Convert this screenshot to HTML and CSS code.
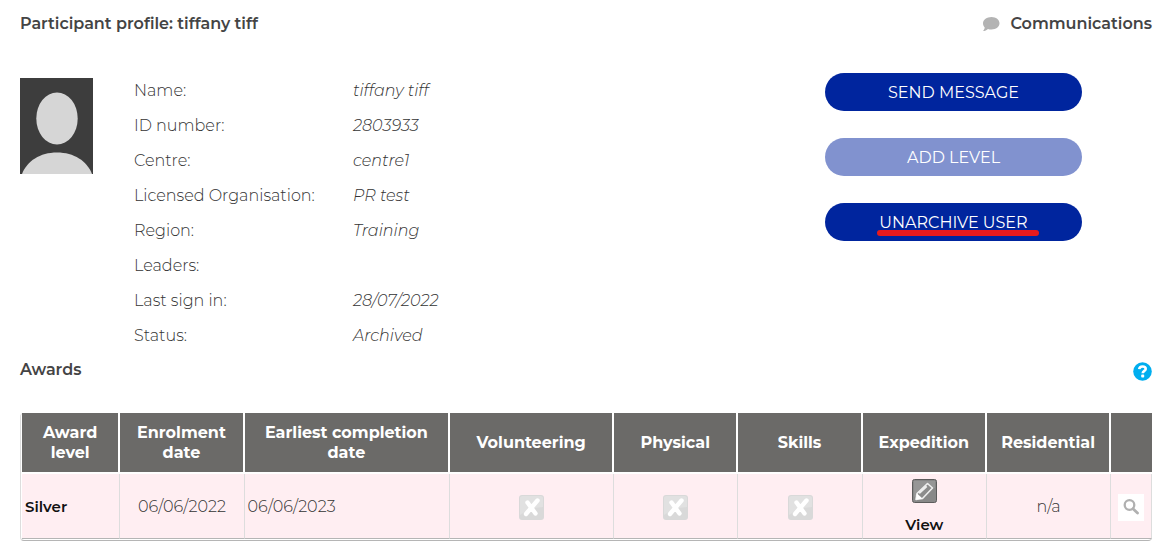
FILE: index.html
```
<!DOCTYPE html>
<html lang="en">
<head>
  <meta charset="UTF-8">
  <meta name="viewport" content="width=device-width, initial-scale=1.0">
  <title>Participant profile</title>
  <link rel="stylesheet" href="styles.css">
</head>
<body>
  <header class="page-header">
    <h1>Participant profile: tiffany tiff</h1>
    <a class="communications" href="#communications">
      <svg width="18" height="16" viewBox="0 0 18 16" aria-hidden="true">
        <path fill="#b3b3b3" d="M9.500 1C14 1 17.500 3.800 17.500 7.300S14 13.500 9.500 13.500C8.200 13.500 7 13.300 6 12.900C4.700 14.200 3 14.900 1 15C2 14 2.600 12.800 2.700 11.500C1.600 10.400 1 9 1 7.300C1 3.800 5 1 9.500 1Z"/>
      </svg>
      Communications
    </a>
  </header>

  <main>
    <section class="profile">
      <svg class="avatar" width="73" height="96" viewBox="0 0 73 96" role="img" aria-label="Profile picture">
        <rect width="73" height="96" fill="#3d3d3d"/>
        <ellipse cx="37" cy="40.500" rx="20.700" ry="26" fill="#d6d6d6"/>
        <path fill="#d6d6d6" d="M2 96C7 83 20 74.500 37 74.500S67 83 72 96Z"/>
      </svg>

      <dl class="details">
        <dt>Name:</dt><dd>tiffany tiff</dd>
        <dt>ID number:</dt><dd>2803933</dd>
        <dt>Centre:</dt><dd>centre1</dd>
        <dt>Licensed Organisation:</dt><dd>PR test</dd>
        <dt>Region:</dt><dd>Training</dd>
        <dt>Leaders:</dt><dd></dd>
        <dt>Last sign in:</dt><dd>28/07/2022</dd>
        <dt>Status:</dt><dd>Archived</dd>
      </dl>

      <div class="actions">
        <button class="btn" type="button">SEND MESSAGE</button>
        <button class="btn" type="button" disabled>ADD LEVEL</button>
        <button class="btn marked" type="button">UNARCHIVE USER</button>
      </div>
    </section>

    <section>
      <div class="awards-header">
        <h2>Awards</h2>
        <a class="help" href="#help" aria-label="Help">
          <svg width="19" height="19" viewBox="0 0 19 19" aria-hidden="true">
            <circle cx="9.500" cy="9.500" r="9.300" fill="#00aeef"/>
            <path d="M6.200 7.200C6.400 5.300 7.700 4.500 9.500 4.500C11.400 4.500 12.700 5.400 12.700 6.900C12.700 8.900 9.700 8.900 9.700 11.300" fill="none" stroke="#fff" stroke-width="2.600"/>
            <rect x="8.200" y="12.600" width="3" height="3" rx="0.800" fill="#fff"/>
          </svg>
        </a>
      </div>

      <!-- Shared award icons -->
      <svg class="icon-defs" width="0" height="0" aria-hidden="true">
        <symbol id="cross" viewBox="0 0 25 25">
          <rect width="25" height="25" rx="3" fill="#d9d9d9"/>
          <path d="M1 3Q1 1 3 1H22Q24 1 24 3V12Q12 12 1 20Z" fill="#e1e1e1"/>
          <path d="M8.500 7.500L16.500 18.500M18.500 5.500L7 19" fill="none" stroke="#fff" stroke-width="4.400" stroke-linecap="round"/>
        </symbol>
      </svg>

      <div class="table-wrap">
        <table class="awards">
          <colgroup>
            <col class="col-level">
            <col class="col-section">
            <col class="col-completion">
            <col class="col-volunteering">
            <col class="col-section">
            <col class="col-section">
            <col class="col-section">
            <col class="col-section">
            <col>
          </colgroup>
          <thead>
            <tr>
              <th>Award level</th>
              <th>Enrolment date</th>
              <th>Earliest completion date</th>
              <th>Volunteering</th>
              <th>Physical</th>
              <th>Skills</th>
              <th>Expedition</th>
              <th>Residential</th>
              <th></th>
            </tr>
          </thead>
          <tbody>
            <tr>
              <td class="level">Silver</td>
              <td>06/06/2022</td>
              <td class="left">06/06/2023</td>
              <td><svg class="icon" width="25" height="25" role="img" aria-label="Not started"><use href="#cross"/></svg></td>
              <td><svg class="icon" width="25" height="25" role="img" aria-label="Not started"><use href="#cross"/></svg></td>
              <td><svg class="icon" width="25" height="25" role="img" aria-label="Not started"><use href="#cross"/></svg></td>
              <td>
                <a class="view" href="#expedition">
                  <svg width="25" height="24" viewBox="0 0 25 24" aria-hidden="true">
                    <rect x="0.500" y="0.500" width="24" height="23" rx="2" fill="#888" stroke="#5c5c5c"/>
                    <path d="M2 2H23V9Q12 10 2 18Z" fill="#969696"/>
                    <path d="M5 14.500L15.500 4.500L20.500 9L10.500 19.500L4 20.500Z" fill="#8c8c8c" stroke="#eee" stroke-width="1.600" stroke-linejoin="round"/>
                    <path d="M5 14.500L10.500 19.500L4 20.500Z" fill="#fff"/>
                    <path d="M7 14L14.500 7" stroke="#eee" stroke-width="2.400"/>
                  </svg>
                  View
                </a>
              </td>
              <td>n/a</td>
              <td>
                <a class="search" href="#details" aria-label="View award details">
                  <svg width="16" height="16" viewBox="0 0 16 16" aria-hidden="true">
                    <circle cx="6.500" cy="6" r="4.800" fill="none" stroke="#b0b0b0" stroke-width="2.300"/>
                    <path d="M10 9.800L14.500 14" stroke="#b0b0b0" stroke-width="2.800" stroke-linecap="round"/>
                  </svg>
                </a>
              </td>
            </tr>
          </tbody>
        </table>
      </div>
    </section>
  </main>
</body>
</html>
```
FILE: styles.css
```
* {
  box-sizing: border-box;
}
body {
  margin: 0;
  padding: 13px 16px 11px 20px;
  background-color: #fff;
  color: #333;
  font-family: Montserrat, Inter, sans-serif;
  font-size: 16px;
  font-weight: 300;
  line-height: 20px;
}
h1, h2 {
  margin: 0;
  color: #444;
  font-size: 16px;
  font-weight: 600;
  line-height: 22px;
}
a {
  color: inherit;
  text-decoration: none;
}
.page-header {
  display: flex;
  justify-content: space-between;
  align-items: center;
  margin-bottom: 37px;
}
.communications {
  display: flex;
  align-items: center;
  gap: 10px;
  color: #444;
  font-weight: 600;
  line-height: 22px;
}
.profile {
  display: flex;
  align-items: flex-start;
}
.avatar {
  flex: none;
  margin-top: 6px;
}
.details {
  flex: 1;
  display: grid;
  grid-template-columns: 219px 1fr;
  grid-auto-rows: 35px;
  align-items: center;
  margin: 1px 0 0 41px;
}
.details dd {
  margin: 0;
  font-style: italic;
}
.actions {
  display: flex;
  flex-direction: column;
  gap: 27px;
  width: 257px;
  margin: 1px 70px 0 0;
}
.btn {
  position: relative;
  height: 38px;
  padding: 0;
  border: none;
  border-radius: 19px;
  background-color: #00259e;
  color: #fff;
  font-family: inherit;
  font-size: 16px;
  font-weight: 400;
  cursor: pointer;
}
.btn:disabled {
  background-color: #8192cf;
  cursor: default;
}
.marked::after {
  content: "";
  position: absolute;
  left: 52px;
  right: 43px;
  bottom: 5px;
  height: 6px;
  border-radius: 3px;
  background-color: #e81a1c;
}
.awards-header {
  display: flex;
  justify-content: space-between;
  align-items: flex-start;
  margin: 6px 0 32px;
}
.help {
  display: flex;
  padding-top: 3px;
}
.icon-defs {
  display: block;
}
.table-wrap {
  padding: 0 0 1px 1px;
  border-left: 1px solid #ddd;
  border-bottom: 1px solid #b5b5b5;
  border-radius: 4px;
}
.awards {
  width: 100%;
  table-layout: fixed;
  border-collapse: separate;
  border-spacing: 0;
}
.col-level {
  width: 8.7%;
}
.col-section {
  width: 11%;
}
.col-completion {
  width: 18.2%;
}
.col-volunteering {
  width: 14.5%;
}
.awards th {
  height: 61px;
  padding: 0 12px;
  border-right: 2px solid #fff;
  border-bottom: 2px solid #fff;
  background-color: #6b6a68;
  color: #fff;
  font-size: 16px;
  font-weight: 700;
}
.awards th:last-child {
  border-right: none;
}
.awards td {
  height: 65px;
  padding: 3px 3px 1px;
  border-right: 1px solid #ddd;
  border-bottom: 1px solid #b5b5b5;
  background-color: #ffeef2;
  text-align: center;
}
.awards .left {
  text-align: left;
}
.awards .level {
  color: #111;
  font-size: 15px;
  font-weight: 600;
  text-align: left;
}
.icon {
  display: block;
  margin: 0 auto;
}
.view {
  display: flex;
  flex-direction: column;
  align-items: center;
  gap: 12px;
  color: #111;
  font-size: 15px;
  font-weight: 600;
}
.search {
  display: flex;
  justify-content: center;
  align-items: center;
  width: 26px;
  height: 27px;
  margin: 0 auto;
  background-color: #fff;
}
```
